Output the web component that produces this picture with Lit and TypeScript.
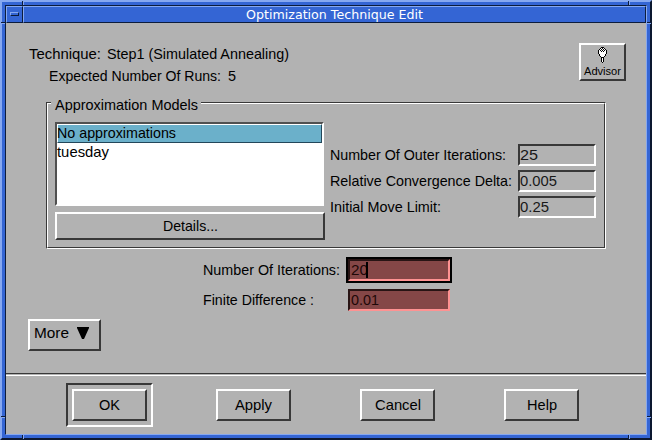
import { LitElement, html, css, svg } from "lit";
import { customElement, property } from "lit/decorators.js";

const INK = css`
  svg { display: block; overflow: visible; flex: none; }
`;

/** A single line of text set to a fixed measure. */
@customElement("fit-text")
class FitText extends LitElement {
  @property() text = "";
  @property({ type: Number }) measure = 0;

  static styles = [INK, css`
    :host { display: block; flex: none; }
    text {
      font-family: var(--face, "Liberation Sans", Arial, sans-serif);
      font-size: var(--size, 15px);
      fill: var(--ink, #000);
      white-space: pre;
    }
  `];

  render() {
    return html`<svg width=${this.measure} height="18">
      ${svg`<text x="0" y="14" textLength=${this.measure} lengthAdjust="spacingAndGlyphs">${this.text}</text>`}
    </svg>`;
  }
}

const t = (text: string, measure: number) =>
  html`<fit-text .text=${text} .measure=${measure}></fit-text>`;

/* Light bulb bitmap: # is outline, o is fill. */
const BULB = [
  "...###...",
  "..#o#o#..",
  ".#o#o#o#.",
  "#o#o#o#o#",
  "#oo#o#oo#",
  "#ooooooo#",
  "#ooooooo#",
  ".#ooooo#.",
  ".#ooooo#.",
  "..#ooo#..",
  "...###...",
  "...#o#...",
  "...#o#...",
  "...#o#...",
  "...#o#...",
  "....#....",
];

const dots = (mark: string) =>
  BULB.flatMap((row, y) => [...row].map((c, x) => (c === mark ? `M${x} ${y}h1v1h-1z` : ""))).join("");

@customElement("app-root")
class AppRoot extends LitElement {
  static styles = [INK, css`
    :host { display: block; width: 652px; height: 440px; }
    * { box-sizing: border-box; }
    .window {
      position: relative; width: 652px; height: 440px;
      border: 2px solid; border-color: #86a8f0 #0c1830 #0c1830 #86a8f0;
      background: #3465d4; padding: 3px;
    }
    .client {
      display: flex; flex-direction: column; height: 430px;
      border: 1px solid; border-color: #0c1c3c #86a8f0 #86a8f0 #0c1c3c;
      background: #b2b2b2;
    }
    .notch { position: absolute; background: #86a8f0; }
    .notch.v { width: 2px; height: 4px; border-left: 1px solid #0c1c3c; }
    .notch.h { height: 2px; width: 4px; border-top: 1px solid #0c1c3c; }
    .n-top { top: -1px; }
    .n-bottom { bottom: -1px; }
    .n-left { left: -1px; }
    .n-right { right: -1px; }
    .at-left { left: 20px; }
    .at-right { right: 20px; }
    .at-top { top: 20px; }
    .at-bottom { bottom: 20px; }

    .titlebar { display: flex; height: 17px; flex: none; }
    .titlebar > div {
      background: #3465d4; border: 1px solid;
      border-color: #86a8f0 #0c1c3c #0c1c3c #86a8f0;
    }
    .menu { width: 17px; padding: 5px 0 0 3px; }
    .menu i {
      display: block; width: 9px; height: 4px; border: 1px solid;
      border-color: #86a8f0 #0c1c3c #0c1c3c #86a8f0;
    }
    .title {
      flex: 1; padding-left: 222px; height: 17px;
      --face: "DejaVu Sans", sans-serif; --size: 12.5px; --ink: #fff;
    }
    .title fit-text { margin-top: -2px; }

    .main { height: 350px; flex: none; }
    .header { display: flex; justify-content: space-between; padding: 20px 20px 0 23px; height: 79px; }
    .facts { display: flex; flex-direction: column; gap: 4px; padding-top: 2px; }
    .fact { display: flex; gap: 6px; }
    .fact.sub { padding-left: 20px; gap: 7px; }

    .btn {
      display: flex; align-items: center; justify-content: center; flex: none;
      width: 75px; height: 32px; border: 2px solid;
      border-color: #fff #383838 #383838 #fff; background: #b2b2b2;
    }
    .advisor { flex-direction: column; justify-content: flex-start; width: 47px; height: 38px; padding-top: 2px; --size: 11.5px; }
    .advisor fit-text { margin-top: -2px; }

    .group {
      position: relative; margin: 0 40px; height: 147px;
      border: 1px solid; border-color: #383838 #fff #fff #383838;
    }
    .group-in {
      display: flex; height: 145px; padding: 18px 8px 0 7px; gap: 5px;
      border: 1px solid; border-color: #fff #383838 #383838 #fff;
    }
    .legend { position: absolute; left: 4px; top: -7px; padding: 0 3px 0 4px; background: #b2b2b2; }
    .models { display: flex; flex-direction: column; gap: 6px; width: 270px; flex: none; }
    .list {
      width: 269px; height: 84px; background: #fff; border: 2px solid;
      border-color: #505050 #fff #fff #505050;
    }
    .item { height: 19px; padding: 1px; }
    .item.on {
      background: #6bb0ca; border: 1px solid; padding: 0;
      border-color: #fff #23475a #23475a #fff;
    }
    .item fit-text { margin: -1px 0 0 -1px; }
    .details { width: 270px; height: 28px; }

    .settings { display: flex; flex-direction: column; gap: 4px; padding-top: 22px; flex: 1; }
    .row { display: flex; align-items: center; justify-content: space-between; }
    .field {
      display: flex; width: 78px; height: 22px; border: 2px solid; flex: none;
      border-color: #383838 #fff #fff #383838; --ink: #181818;
    }
    .params { display: flex; flex-direction: column; gap: 6px; padding: 8px 194px 0 197px; }
    .params .row { padding-right: 2px; }
    .params .focus-row { padding-right: 0; }
    .red { width: 102px; background: #854747; border-color: #281414 #ff9292 #ff9292 #281414; --ink: #200808; padding-left: 1px; }
    .ring { border: 2px solid #000; }
    .caret { width: 2px; height: 16px; margin: 1px 0 0 -2px; background: #000; }
    .more { width: 73px; margin: 8px 0 0 22px; justify-content: flex-start; align-items: flex-start; padding: 3px 0 0 4px; gap: 8px; }
    .arrow { margin-top: 3px; }

    .sep { height: 3px; flex: none; border-top: 1px solid #383838; border-bottom: 1px solid #fff; }
    .footer { display: flex; align-items: flex-start; height: 58px; padding: 7px 0 0 60px; }
    .default { flex: none; padding: 4px; border: 2px solid; border-color: #383838 #fff #fff #383838; margin-right: 63px; }
    .footer > .btn { margin: 6px 69px 0 0; }
    .footer > .btn:last-child { margin-right: 0; }
  `];

  private settings: [string, number, string, number][] = [
    ["Number Of Outer Iterations:", 176, "25", 18],
    ["Relative Convergence Delta:", 182, "0.005", 37],
    ["Initial Move Limit:", 111, "0.25", 29],
  ];

  render() {
    return html`
      <div class="window">
        <div class="client">
          <div class="titlebar">
            <div class="menu"><i></i></div>
            <div class="title">${t("Optimization Technique Edit", 177)}</div>
          </div>
          <div class="main">
            <div class="header">
              <div class="facts">
                <div class="fact">${t("Technique:", 72)}${t("Step1 (Simulated Annealing)", 182)}</div>
                <div class="fact sub">${t("Expected Number Of Runs:", 172)}${t("5", 8)}</div>
              </div>
              <div class="btn advisor">
                <svg width="9" height="16" shape-rendering="crispEdges">
                  <path d=${dots("o")} fill="#fff"></path>
                  <path d=${dots("#")} fill="#000"></path>
                </svg>
                ${t("Advisor", 37)}
              </div>
            </div>
            <div class="group">
              <div class="group-in">
                <div class="models">
                  <div class="list">
                    <div class="item on">${t("No approximations", 119)}</div>
                    <div class="item">${t("tuesday", 52)}</div>
                  </div>
                  <div class="btn details">${t("Details...", 55)}</div>
                </div>
                <div class="settings">
                  ${this.settings.map(([label, w, value, vw]) => html`
                    <div class="row">${t(label, w)}<div class="field">${t(value, vw)}</div></div>`)}
                </div>
              </div>
              <div class="legend">${t("Approximation Models", 143)}</div>
            </div>
            <div class="params">
              <div class="row focus-row">${t("Number Of Iterations:", 137)}
                <div class="ring"><div class="field red">${t("20", 17)}<div class="caret"></div></div></div>
              </div>
              <div class="row">${t("Finite Difference :", 111)}
                <div class="field red">${t("0.01", 28)}</div>
              </div>
            </div>
            <div class="btn more">${t("More", 35)}
              <svg class="arrow" width="12" height="12"><path d="M0 0h12v1l-5 11h-2l-5-11z" fill="#000"></path></svg>
            </div>
          </div>
          <div class="sep"></div>
          <div class="footer">
            <div class="default"><div class="btn">${t("OK", 21)}</div></div>
            <div class="btn">${t("Apply", 37)}</div>
            <div class="btn">${t("Cancel", 46)}</div>
            <div class="btn">${t("Help", 30)}</div>
          </div>
        </div>
        <i class="notch v n-top at-left"></i>
        <i class="notch v n-top at-right"></i>
        <i class="notch v n-bottom at-left"></i>
        <i class="notch v n-bottom at-right"></i>
        <i class="notch h n-left at-top"></i>
        <i class="notch h n-right at-top"></i>
        <i class="notch h n-left at-bottom"></i>
        <i class="notch h n-right at-bottom"></i>
      </div>
    `;
  }
}
